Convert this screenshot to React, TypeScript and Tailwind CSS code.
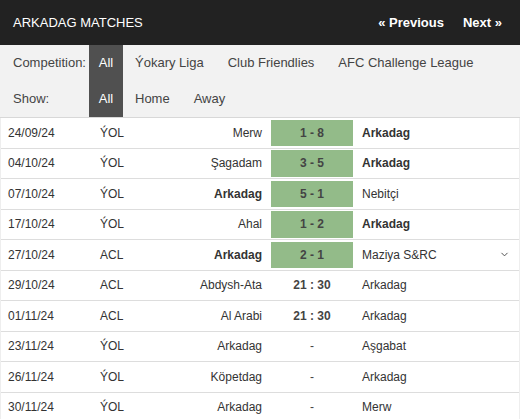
import { ChevronDown } from 'lucide-react';

type Match = {
  date: string;
  comp: string;
  home: string;
  away: string;
  score: string;
  played: boolean;
  homeBold?: boolean;
  awayBold?: boolean;
  expand?: boolean;
};

const MATCHES: Match[] = [
  { date: '24/09/24', comp: 'ÝOL', home: 'Merw', away: 'Arkadag', score: '1 - 8', played: true, awayBold: true },
  { date: '04/10/24', comp: 'ÝOL', home: 'Şagadam', away: 'Arkadag', score: '3 - 5', played: true, awayBold: true },
  { date: '07/10/24', comp: 'ÝOL', home: 'Arkadag', away: 'Nebitçi', score: '5 - 1', played: true, homeBold: true },
  { date: '17/10/24', comp: 'ÝOL', home: 'Ahal', away: 'Arkadag', score: '1 - 2', played: true, awayBold: true },
  { date: '27/10/24', comp: 'ACL', home: 'Arkadag', away: 'Maziya S&RC', score: '2 - 1', played: true, homeBold: true, expand: true },
  { date: '29/10/24', comp: 'ACL', home: 'Abdysh-Ata', away: 'Arkadag', score: '21 : 30', played: false },
  { date: '01/11/24', comp: 'ACL', home: 'Al Arabi', away: 'Arkadag', score: '21 : 30', played: false },
  { date: '23/11/24', comp: 'ÝOL', home: 'Arkadag', away: 'Aşgabat', score: '-', played: false },
  { date: '26/11/24', comp: 'ÝOL', home: 'Köpetdag', away: 'Arkadag', score: '-', played: false },
  { date: '30/11/24', comp: 'ÝOL', home: 'Arkadag', away: 'Merw', score: '-', played: false },
];

function FilterRow({ label, items }: { label: string; items: string[] }) {
  return (
    <div className="flex h-[36px] items-stretch text-[13px] text-[#444]">
      <div className="flex w-[89px] items-center pl-[13px]">{label}</div>
      <div className="flex w-[34px] items-center justify-center bg-[#505050] text-white">All</div>
      {items.map(it => (
        <div key={it} className="flex items-center px-3">
          {it}
        </div>
      ))}
    </div>
  );
}

export default function App() {
  return (
    <div className="w-[520px] bg-white font-['Liberation_Sans',Arial,sans-serif]">
      <div className="flex h-[45px] items-center justify-between bg-[#222] pl-[13px] pr-[18px] text-white">
        <span className="text-[13px]">ARKADAG MATCHES</span>
        <div className="flex gap-[19px] text-[13px] font-bold">
          <span>« Previous</span>
          <span>Next »</span>
        </div>
      </div>

      <div className="border-b border-[#d8d8d8] bg-[#f2f2f2]">
        <FilterRow label="Competition:" items={['Ýokary Liga', 'Club Friendlies', 'AFC Challenge League']} />
        <FilterRow label="Show:" items={['Home', 'Away']} />
      </div>

      <div className="border-x border-[#eee] text-[12px] text-[#333]">
        {MATCHES.map(m => (
          <div key={m.date} className="flex h-[30.5px] items-stretch border-b border-[#ddd]">
            <div className="flex w-[92px] items-center pl-[7px]">{m.date}</div>
            <div className="flex w-[70px] items-center pl-[7px]">{m.comp}</div>
            <div
              className={`flex w-[103px] items-center justify-end pr-[4px] ${m.homeBold ? 'font-bold' : ''}`}
            >
              {m.home}
            </div>
            <div className="ml-[5px] flex w-[82px] py-[1.5px]">
              <div
                className={`flex flex-1 items-center justify-center ${
                  m.played ? 'bg-[#93bb89] font-bold text-[#444]' : m.score === '-' ? 'text-[#444]' : 'font-bold text-[#444]'
                }`}
              >
                {m.score}
              </div>
            </div>
            <div className={`flex flex-1 items-center pl-[9px] ${m.awayBold ? 'font-bold' : ''}`}>{m.away}</div>
            {m.expand && (
              <div className="flex items-center pr-[9px] text-[#444]">
                <ChevronDown size={11} strokeWidth={2} />
              </div>
            )}
          </div>
        ))}
      </div>
    </div>
  );
}
